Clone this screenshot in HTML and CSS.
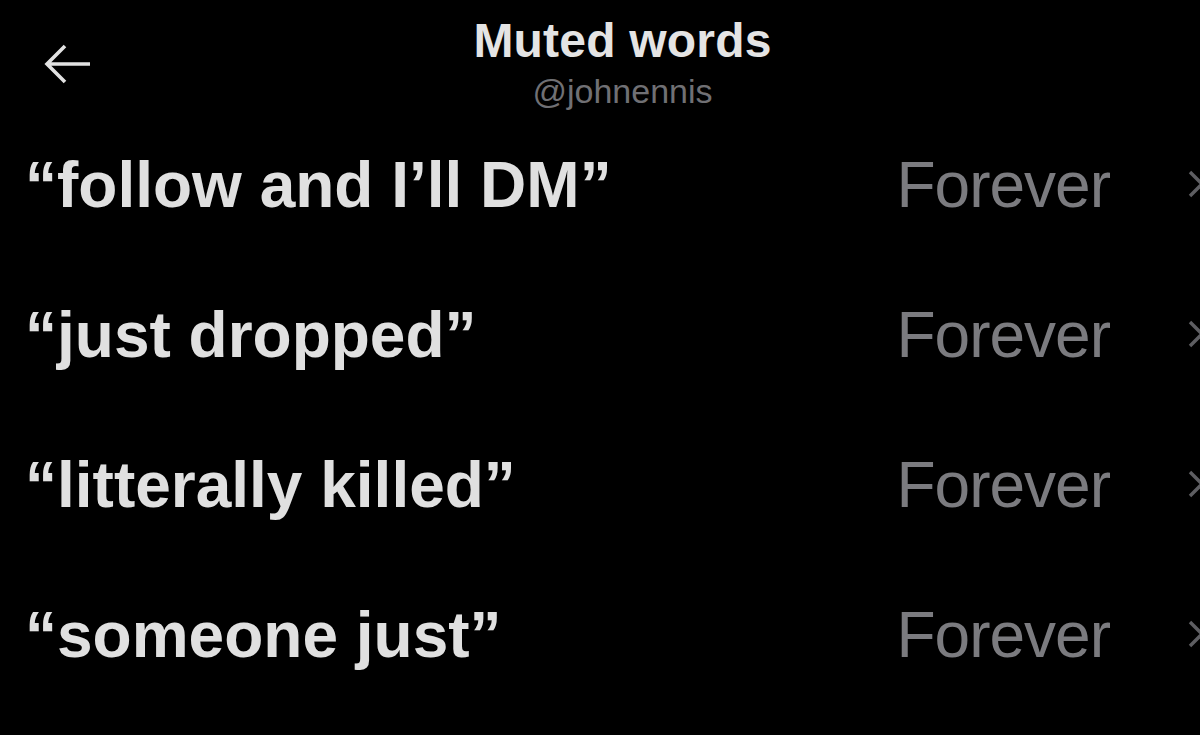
FILE: index.html
```html
<!DOCTYPE html>
<html lang="en">
<head>
<meta charset="utf-8">
<title>Muted words</title>
<link rel="stylesheet" href="styles.css">
</head>
<body>
<div class="screen">
  <header class="header">
    <button class="back" aria-label="Back">
      <svg width="48" height="42" viewBox="0 0 48 42"><path d="M22 3 L4 21 L22 39 M4 21 H47" fill="none" stroke="#e2e2e2" stroke-width="3.6" stroke-linecap="butt" stroke-linejoin="miter"/></svg>
    </button>
    <div class="titles">
      <h1 class="title">Muted words</h1>
      <div class="handle">@johnennis</div>
    </div>
    <div></div>
  </header>
  <ul class="list">
    <li class="row"><span class="word">“follow and I’ll DM”</span><span class="right"><span class="dur">Forever</span><svg class="x" width="28" height="28" viewBox="0 0 28 28"><path d="M2 2 L26 26 M26 2 L2 26" stroke="#5e5e62" stroke-width="3.4" fill="none"/></svg></span></li>
    <li class="row"><span class="word">“just dropped”</span><span class="right"><span class="dur">Forever</span><svg class="x" width="28" height="28" viewBox="0 0 28 28"><path d="M2 2 L26 26 M26 2 L2 26" stroke="#5e5e62" stroke-width="3.4" fill="none"/></svg></span></li>
    <li class="row"><span class="word">“litterally killed”</span><span class="right"><span class="dur">Forever</span><svg class="x" width="28" height="28" viewBox="0 0 28 28"><path d="M2 2 L26 26 M26 2 L2 26" stroke="#5e5e62" stroke-width="3.4" fill="none"/></svg></span></li>
    <li class="row"><span class="word">“someone just”</span><span class="right"><span class="dur">Forever</span><svg class="x" width="28" height="28" viewBox="0 0 28 28"><path d="M2 2 L26 26 M26 2 L2 26" stroke="#5e5e62" stroke-width="3.4" fill="none"/></svg></span></li>
  </ul>
</div>
</body>
</html>
```

FILE: styles.css
```css
html, body {
  margin: 0;
  padding: 0;
  background: #000;
  height: 100%;
  overflow: hidden;
}
body {
  font-family: "Liberation Sans", Arial, sans-serif;
  color: #e1e1e1;
}
.screen {
  width: 1200px;
  height: 735px;
  overflow: hidden;
}
.header {
  display: grid;
  grid-template-columns: 90px 1fr 45px;
  align-items: start;
  height: 110px;
  box-sizing: border-box;
  padding-top: 17px;
}
.back {
  background: none;
  border: 0;
  padding: 0;
  margin: 26px 0 0 43px;
  width: 48px;
  height: 42px;
  display: block;
}
.back svg { display: block; }
.titles {
  text-align: center;
}
.title {
  margin: 0;
  font-size: 48px;
  line-height: 48px;
  font-weight: 700;
  color: #e4e4e4;
  letter-spacing: 0.2px;
}
.handle {
  margin-top: 7px;
  font-size: 34px;
  line-height: 38px;
  color: #707074;
}
.list {
  list-style: none;
  margin: 0 -16px 0 0;
  padding: 0;
}
.row {
  display: flex;
  align-items: center;
  justify-content: space-between;
  height: 150px;
  padding-left: 25px;
}
.word {
  font-size: 64px;
  font-weight: 700;
  color: #e0e0e0;
  letter-spacing: 0;
}
.right {
  display: flex;
  align-items: center;
}
.dur {
  font-size: 64px;
  letter-spacing: -1px;
  color: #7b7b7f;
}
.x {
  display: block;
  margin-left: 78px;
  margin-top: -2px;
}
```
